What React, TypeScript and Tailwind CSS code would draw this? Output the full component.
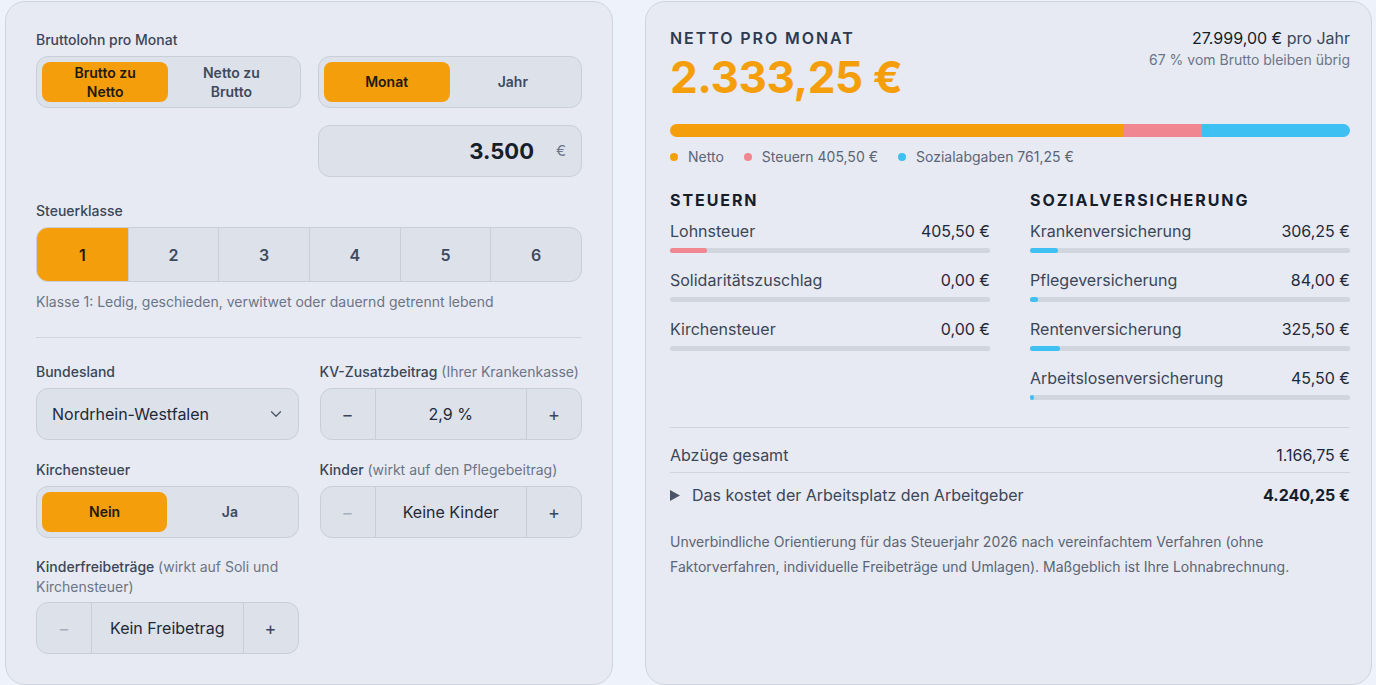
import React from 'react';
import { ChevronDown } from 'lucide-react';

const font = { fontFamily: 'Inter, "Noto Sans", sans-serif' };

const Label = ({ children, hint }: { children: React.ReactNode; hint?: string }) => (
  <div className="text-[14px] leading-5 font-medium text-[#3b4658]">
    {children}
    {hint && <span className="font-normal text-[#6b7588]"> {hint}</span>}
  </div>
);

const Toggle = ({ options, active, tall }: { options: string[]; active: number; tall?: boolean }) => (
  <div className="flex h-[52px] rounded-xl border border-[#c9ced9] bg-[#dde1ea] p-[5px]">
    {options.map((o, i) => (
      <div
        key={o}
        className={
          'flex-1 flex items-center justify-center rounded-lg text-center text-[14px] font-semibold whitespace-pre-line ' +
          (tall ? 'leading-[19px] ' : 'leading-5 ') +
          (i === active ? 'bg-[#f59e0b] text-[#1f1a12]' : 'text-[#3f4a5e]')
        }
      >
        {o}
      </div>
    ))}
  </div>
);

const Stepper = ({ value, minusDisabled }: { value: string; minusDisabled?: boolean }) => (
  <div className="flex h-[52px] rounded-xl border border-[#c9ced9] bg-[#dde1ea] text-[#1f2937]">
    <div className={'w-[54px] flex items-center justify-center text-[18px] ' + (minusDisabled ? 'text-[#aab1bd]' : 'text-[#3b4658]')}>
      −
    </div>
    <div className="flex-1 flex items-center justify-center border-x border-[#c9ced9] text-[16px]">{value}</div>
    <div className="w-[54px] flex items-center justify-center text-[18px] text-[#3b4658]">+</div>
  </div>
);

const DetailRow = ({ label, value, pct, color }: { label: string; value: string; pct: number; color: string }) => (
  <div>
    <div className="flex justify-between text-[16px] leading-6">
      <span className="text-[#3b4658]">{label}</span>
      <span className="text-[#1e293b]">{value}</span>
    </div>
    <div className="mt-[5px] h-[5px] rounded-full bg-[#d0d5de]">
      <div className={'h-full rounded-full ' + color} style={{ width: `${pct}%` }} />
    </div>
  </div>
);

const brutto = 3500;
const taxes = [
  { label: 'Lohnsteuer', value: 405.5 },
  { label: 'Solidaritätszuschlag', value: 0 },
  { label: 'Kirchensteuer', value: 0 },
];
const social = [
  { label: 'Krankenversicherung', value: 306.25 },
  { label: 'Pflegeversicherung', value: 84 },
  { label: 'Rentenversicherung', value: 325.5 },
  { label: 'Arbeitslosenversicherung', value: 45.5 },
];

const eur = (n: number) =>
  n.toLocaleString('de-DE', { minimumFractionDigits: 2, maximumFractionDigits: 2 }) + ' €';

export default function App() {
  return (
    <div style={font} className="min-h-[685px] bg-[#eef2fa] pl-[5px] pr-[4px] pt-px">
      <div className="flex gap-8 h-[684px]">
        {/* Eingaben */}
        <div className="w-[608px] shrink-0 rounded-[20px] border border-[#cfd4de] bg-[#e7eaf2] px-[30px] pt-[28px]">
          <Label>Bruttolohn pro Monat</Label>
          <div className="mt-[6px] grid grid-cols-2 gap-[17px]">
            <Toggle options={['Brutto zu\nNetto', 'Netto zu\nBrutto']} active={0} tall />
            <Toggle options={['Monat', 'Jahr']} active={0} />
            <div />
            <div className="flex h-[52px] items-center justify-end rounded-xl border border-[#c9ced9] bg-[#dde1ea] pr-[15px]">
              <span className="text-[22px] font-bold text-[#161d2b]">3.500</span>
              <span className="ml-[22px] text-[15px] text-[#6b7588]">€</span>
            </div>
          </div>

          <div className="mt-[24px]">
            <Label>Steuerklasse</Label>
            <div className="mt-[6px] grid grid-cols-6 h-[55px] overflow-hidden rounded-xl border border-[#c9ced9] bg-[#dde1ea]">
              {[1, 2, 3, 4, 5, 6].map((n) => (
                <div
                  key={n}
                  className={
                    'flex items-center justify-center text-[16px] font-semibold ' +
                    (n > 1 ? 'border-l border-[#c9ced9] ' : '') +
                    (n === 1 ? 'bg-[#f59e0b] text-[#1f1a12]' : 'text-[#3f4a5e]')
                  }
                >
                  {n}
                </div>
              ))}
            </div>
            <div className="mt-[10px] text-[14px] leading-5 text-[#6b7588]">
              Klasse 1: Ledig, geschieden, verwitwet oder dauernd getrennt lebend
            </div>
          </div>

          <div className="mt-[25px] border-t border-[#cfd4de]" />

          <div className="mt-[24px] grid grid-cols-2 gap-x-[21px]">
            <div>
              <Label>Bundesland</Label>
              <div className="mt-[6px] flex h-[52px] items-center justify-between rounded-xl border border-[#c9ced9] bg-[#dde1ea] pl-[15px] pr-[13px] text-[16px] text-[#1f2937]">
                Nordrhein-Westfalen
                <ChevronDown size={18} strokeWidth={1.75} className="text-[#4b5567]" />
              </div>
            </div>
            <div>
              <Label hint="(Ihrer Krankenkasse)">KV-Zusatzbeitrag</Label>
              <div className="mt-[6px]">
                <Stepper value="2,9 %" />
              </div>
            </div>

            <div className="mt-[20px]">
              <Label>Kirchensteuer</Label>
              <div className="mt-[6px]">
                <Toggle options={['Nein', 'Ja']} active={0} />
              </div>
            </div>
            <div className="mt-[20px]">
              <Label hint="(wirkt auf den Pflegebeitrag)">Kinder</Label>
              <div className="mt-[6px]">
                <Stepper value="Keine Kinder" minusDisabled />
              </div>
            </div>

            <div className="mt-[19px]">
              <div className="text-[14px] leading-5 font-medium text-[#3b4658]">
                Kinderfreibeträge <span className="font-normal text-[#6b7588]">(wirkt auf Soli und</span>
                <br />
                <span className="font-normal text-[#6b7588]">Kirchensteuer)</span>
              </div>
              <div className="mt-[5px]">
                <Stepper value="Kein Freibetrag" minusDisabled />
              </div>
            </div>
          </div>
        </div>

        {/* Ergebnis */}
        <div className="flex-1 rounded-[20px] border border-[#cfd4de] bg-[#e7eaf2] pl-6 pr-[21px] pt-6">
          <div className="flex items-start justify-between">
            <div>
              <div className="text-[16px] leading-6 font-semibold tracking-[0.12em] text-[#2d3a4f]">NETTO PRO MONAT</div>
              <div className="mt-[1px] text-[44px] leading-[52px] font-bold tracking-[-0.01em] text-[#f59e0b]">2.333,25 €</div>
            </div>
            <div className="text-right">
              <div className="text-[16px] leading-6 text-[#3b4658]">
                <span className="text-[#161d2b]">27.999,00 €</span> pro Jahr
              </div>
              <div className="text-[14px] leading-5 text-[#6b7588]">67 % vom Brutto bleiben übrig</div>
            </div>
          </div>

          <div className="mt-[21px] flex h-[13px] overflow-hidden rounded-full">
            <div className="bg-[#f59e0b]" style={{ width: `${(2333.25 / brutto) * 100}%` }} />
            <div className="bg-[#f0868f]" style={{ width: `${(405.5 / brutto) * 100}%` }} />
            <div className="flex-1 bg-[#3fc0f2]" />
          </div>

          <div className="mt-[10px] flex items-center gap-[20px] text-[14px] leading-5 text-[#5b6576]">
            <span className="flex items-center gap-[10px]">
              <span className="h-2 w-2 rounded-full bg-[#f59e0b]" />
              Netto
            </span>
            <span className="flex items-center gap-[10px]">
              <span className="h-2 w-2 rounded-full bg-[#f0868f]" />
              Steuern 405,50 €
            </span>
            <span className="flex items-center gap-[10px]">
              <span className="h-2 w-2 rounded-full bg-[#3fc0f2]" />
              Sozialabgaben 761,25 €
            </span>
          </div>

          <div className="mt-[21px] grid grid-cols-2 gap-x-10">
            <div>
              <div className="text-[16px] leading-6 font-bold tracking-[0.12em] text-[#161d2b]">STEUERN</div>
              <div className="mt-[7px] flex flex-col gap-[15px]">
                {taxes.map((t) => (
                  <DetailRow key={t.label} label={t.label} value={eur(t.value)} pct={(t.value / brutto) * 100} color="bg-[#f0868f]" />
                ))}
              </div>
            </div>
            <div>
              <div className="text-[16px] leading-6 font-bold tracking-[0.12em] text-[#161d2b]">SOZIALVERSICHERUNG</div>
              <div className="mt-[7px] flex flex-col gap-[15px]">
                {social.map((t) => (
                  <DetailRow key={t.label} label={t.label} value={eur(t.value)} pct={(t.value / brutto) * 100} color="bg-[#3fc0f2]" />
                ))}
              </div>
            </div>
          </div>

          <div className="mt-[27px] border-t border-[#cfd4de]" />
          <div className="flex justify-between pt-[15px] pb-[5px] text-[16px] leading-6">
            <span className="text-[#3b4658]">Abzüge gesamt</span>
            <span className="text-[#1e293b]">1.166,75 €</span>
          </div>
          <div className="border-t border-[#cfd4de]" />
          <div className="flex items-center justify-between pt-[10px] text-[16px] leading-6">
            <span className="flex items-center gap-[12px] text-[#3b4658]">
              <svg width="10" height="11" viewBox="0 0 10 11" className="fill-[#4b5567]">
                <path d="M0 0 L10 5.5 L0 11 Z" />
              </svg>
              Das kostet der Arbeitsplatz den Arbeitgeber
            </span>
            <span className="font-bold text-[#161d2b]">4.240,25 €</span>
          </div>

          <p className="mt-[22px] max-w-[640px] text-[14px] leading-[25px] text-[#5b6576]">
            Unverbindliche Orientierung für das Steuerjahr 2026 nach vereinfachtem Verfahren (ohne Faktorverfahren,
            individuelle Freibeträge und Umlagen). Maßgeblich ist Ihre Lohnabrechnung.
          </p>
        </div>
      </div>
    </div>
  );
}
